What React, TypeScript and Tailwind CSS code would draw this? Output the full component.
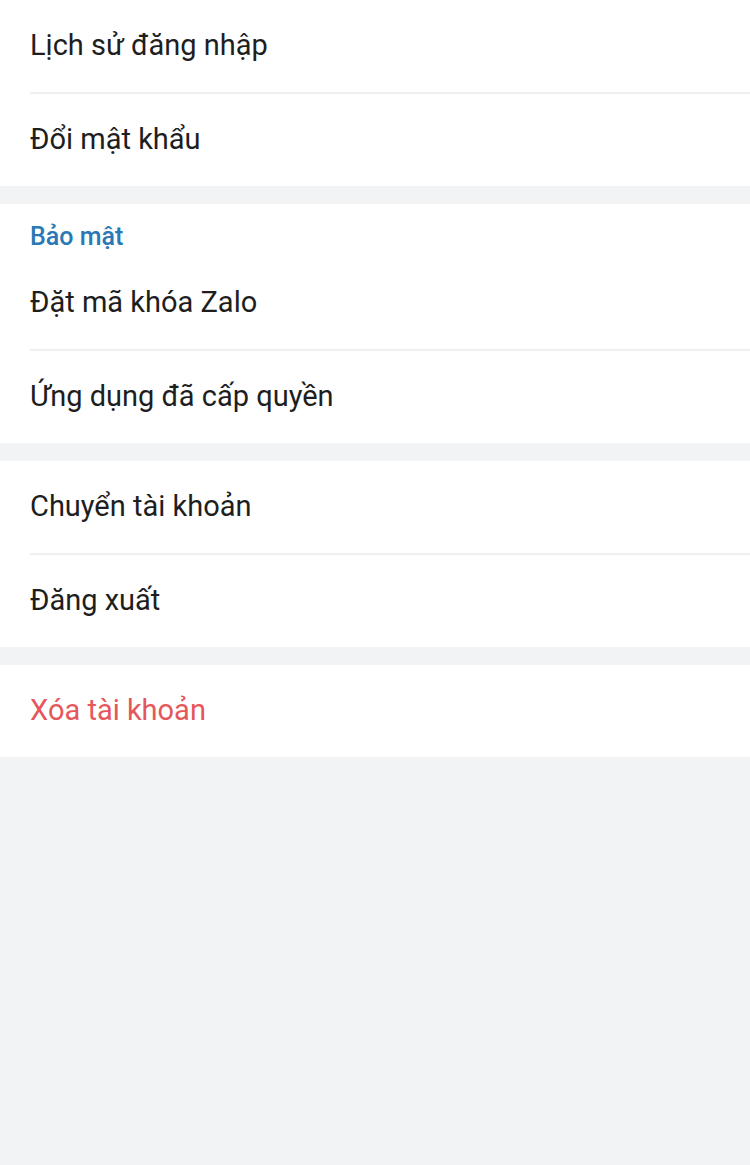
import React from "react";

const Row = ({ label, red }: { label: string; red?: boolean }) => (
  <div className={`h-[92px] flex items-center pl-[30px] text-[29px] ${red ? "text-[#e5575a]" : "text-[#1e1e1e]"}`}>
    {label}
  </div>
);

const Divider = () => (
  <div className="pl-[30px]">
    <div className="h-[2px] bg-[#eef0f2]" />
  </div>
);

export default function App() {
  return (
    <div className="min-h-[1165px] bg-[#f2f3f5] flex flex-col gap-[18px]" style={{ fontFamily: "Roboto, 'Noto Sans', sans-serif" }}>
      <div className="bg-white">
        <Row label="Lịch sử đăng nhập" />
        <Divider />
        <Row label="Đổi mật khẩu" />
      </div>
      <div className="bg-white">
        <div className="pt-[20px] pb-[7px] pl-[30px] text-[25px] leading-[26px] font-medium text-[#2a78b5]">Bảo mật</div>
        <Row label="Đặt mã khóa Zalo" />
        <Divider />
        <Row label="Ứng dụng đã cấp quyền" />
      </div>
      <div className="bg-white">
        <Row label="Chuyển tài khoản" />
        <Divider />
        <Row label="Đăng xuất" />
      </div>
      <div className="bg-white">
        <Row label="Xóa tài khoản" red />
      </div>
    </div>
  );
}
